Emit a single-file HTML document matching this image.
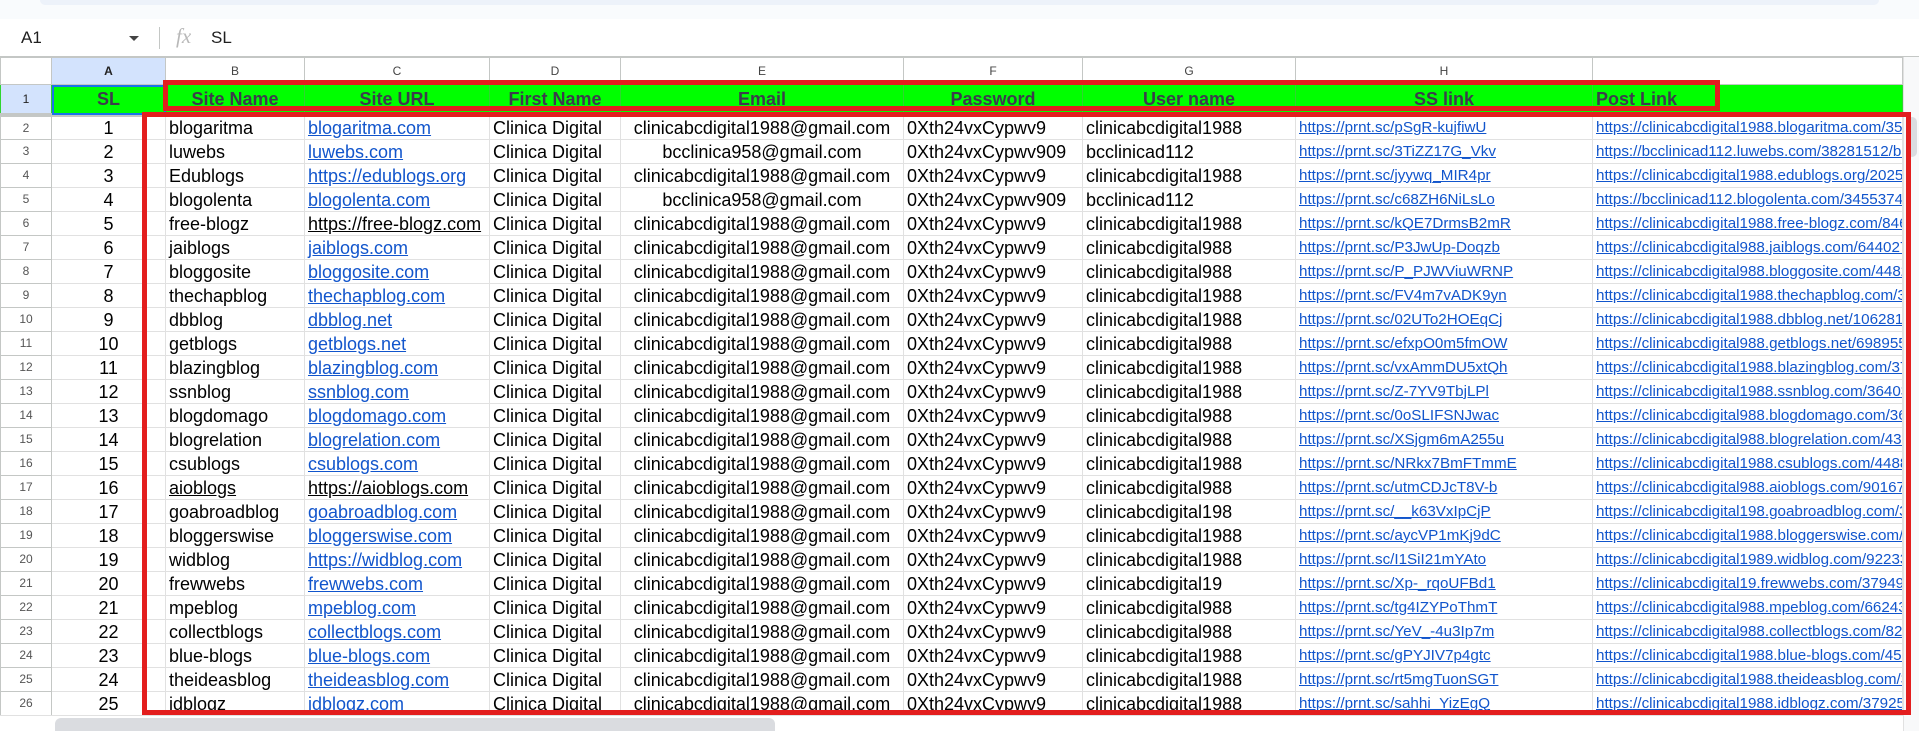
<!DOCTYPE html>
<html><head><meta charset="utf-8"><style>
*{box-sizing:border-box;margin:0;padding:0}
body{width:1919px;height:731px;overflow:hidden;background:#fff;font-family:"Liberation Sans",Arial,sans-serif;position:relative}
.top{position:absolute;left:0;top:0;width:1919px;height:19px;background:#f9fbfd}
.top div{position:absolute;left:40px;right:40px;top:0;height:5px;background:#edf2fa;border-radius:0 0 12px 12px}
.fb{position:absolute;left:0;top:19px;width:1919px;height:38px;background:#fff;border-bottom:1px solid #c4c7c5}
.nb{position:absolute;left:21px;top:9px;font-size:17px;color:#1f1f1f}
.arr{position:absolute;left:129px;top:17px;width:0;height:0;border-left:5px solid transparent;border-right:5px solid transparent;border-top:5px solid #444}
.sep{position:absolute;left:159px;top:8px;width:1px;height:22px;background:#c4c7c5}
.fx{position:absolute;left:176px;top:5px;font-family:"Liberation Serif",serif;font-style:italic;font-size:21px;color:#b8b8b8}
.fv{position:absolute;left:211px;top:9px;font-size:17px;color:#1f1f1f}
table{position:absolute;left:0;top:57px;border-collapse:collapse;table-layout:fixed;width:1902px}
td{overflow:hidden;white-space:nowrap;border:1px solid #e1e1e1;font-size:18px;color:#000;padding:0 3px;height:24px;line-height:22px;vertical-align:bottom}
tr.ch td{height:27px;font-size:12px;line-height:25px;vertical-align:middle;color:#444;text-align:center;border-color:#c4c7c5;background:#fff}
tr.h1 td{height:30px;line-height:24px;background:#00ff00;font-weight:bold;font-size:18px;color:#3c3c4c;text-align:center;border-color:#2fd52f;border-bottom:4px solid #c4c7c5;vertical-align:middle}
td.rh{font-size:12px;color:#555;text-align:center;border-color:#c4c7c5;background:#fff;padding:0;vertical-align:middle;line-height:22px}
tr.h1 td.rh{background:#d3e3fd;color:#222;font-weight:normal;font-size:12px}
tr.ch td.sel{background:#d3e3fd;font-weight:bold;color:#222}
td.c{text-align:center}
a{color:#1155cc;text-decoration:underline}
td.s{font-size:15.2px}
.k{color:#000;text-decoration:underline}
.red{position:absolute;border:5px solid #e31e1e}
.hs{position:absolute;left:55px;top:718px;width:720px;height:13px;background:#dadce0;border-radius:6px 6px 0 0}
.vs{position:absolute;left:1903px;top:57px;width:16px;height:674px;background:#f8f9fa;border-left:1px solid #e1e1e1}
.vs div{position:absolute;left:3px;top:60px;width:10px;height:40px;background:#dadce0;border-radius:5px}
</style></head><body>
<div class="top"><div></div></div>
<div class="fb"><span class="nb">A1</span><span class="arr"></span><span class="sep"></span><span class="fx">fx</span><span class="fv">SL</span></div>
<table>
<colgroup><col style="width:51px"><col style="width:114px"><col style="width:139px"><col style="width:185px"><col style="width:131px"><col style="width:283px"><col style="width:179px"><col style="width:213px"><col style="width:297px"><col style="width:310px"></colgroup>
<tr class="ch"><td></td><td class="sel">A</td><td>B</td><td>C</td><td>D</td><td>E</td><td>F</td><td>G</td><td>H</td><td></td></tr>
<tr class="h1"><td class="rh">1</td><td style="outline:2px solid #1a73e8;outline-offset:-2px">SL</td><td>Site Name</td><td>Site URL</td><td>First Name</td><td>Email</td><td>Password</td><td>User name</td><td>SS link</td><td style="text-align:left">Post Link</td></tr>
<tr><td class="rh">2</td><td class="c">1</td><td>blogaritma</td><td><a>blogaritma.com</a></td><td>Clinica Digital</td><td class="c">clinicabcdigital1988@gmail.com</td><td>0Xth24vxCypwv9</td><td>clinicabcdigital1988</td><td class="s"><a>https://prnt.sc/pSgR-kujfiwU</a></td><td class="s"><a>https://clinicabcdigital1988.blogaritma.com/350123</a></td></tr>
<tr><td class="rh">3</td><td class="c">2</td><td>luwebs</td><td><a>luwebs.com</a></td><td>Clinica Digital</td><td class="c">bcclinica958@gmail.com</td><td>0Xth24vxCypwv909</td><td>bcclinicad112</td><td class="s"><a>https://prnt.sc/3TiZZ17G_Vkv</a></td><td class="s"><a>https://bcclinicad112.luwebs.com/38281512/bu</a></td></tr>
<tr><td class="rh">4</td><td class="c">3</td><td>Edublogs</td><td><a>https://edublogs.org</a></td><td>Clinica Digital</td><td class="c">clinicabcdigital1988@gmail.com</td><td>0Xth24vxCypwv9</td><td>clinicabcdigital1988</td><td class="s"><a>https://prnt.sc/jyywq_MIR4pr</a></td><td class="s"><a>https://clinicabcdigital1988.edublogs.org/2025/</a></td></tr>
<tr><td class="rh">5</td><td class="c">4</td><td>blogolenta</td><td><a>blogolenta.com</a></td><td>Clinica Digital</td><td class="c">bcclinica958@gmail.com</td><td>0Xth24vxCypwv909</td><td>bcclinicad112</td><td class="s"><a>https://prnt.sc/c68ZH6NiLsLo</a></td><td class="s"><a>https://bcclinicad112.blogolenta.com/34553741</a></td></tr>
<tr><td class="rh">6</td><td class="c">5</td><td>free-blogz</td><td><span class="k">https://free-blogz.com</span></td><td>Clinica Digital</td><td class="c">clinicabcdigital1988@gmail.com</td><td>0Xth24vxCypwv9</td><td>clinicabcdigital1988</td><td class="s"><a>https://prnt.sc/kQE7DrmsB2mR</a></td><td class="s"><a>https://clinicabcdigital1988.free-blogz.com/8461</a></td></tr>
<tr><td class="rh">7</td><td class="c">6</td><td>jaiblogs</td><td><a>jaiblogs.com</a></td><td>Clinica Digital</td><td class="c">clinicabcdigital1988@gmail.com</td><td>0Xth24vxCypwv9</td><td>clinicabcdigital988</td><td class="s"><a>https://prnt.sc/P3JwUp-Doqzb</a></td><td class="s"><a>https://clinicabcdigital988.jaiblogs.com/644027</a></td></tr>
<tr><td class="rh">8</td><td class="c">7</td><td>bloggosite</td><td><a>bloggosite.com</a></td><td>Clinica Digital</td><td class="c">clinicabcdigital1988@gmail.com</td><td>0Xth24vxCypwv9</td><td>clinicabcdigital988</td><td class="s"><a>https://prnt.sc/P_PJWViuWRNP</a></td><td class="s"><a>https://clinicabcdigital988.bloggosite.com/4482</a></td></tr>
<tr><td class="rh">9</td><td class="c">8</td><td>thechapblog</td><td><a>thechapblog.com</a></td><td>Clinica Digital</td><td class="c">clinicabcdigital1988@gmail.com</td><td>0Xth24vxCypwv9</td><td>clinicabcdigital1988</td><td class="s"><a>https://prnt.sc/FV4m7vADK9yn</a></td><td class="s"><a>https://clinicabcdigital1988.thechapblog.com/3</a></td></tr>
<tr><td class="rh">10</td><td class="c">9</td><td>dbblog</td><td><a>dbblog.net</a></td><td>Clinica Digital</td><td class="c">clinicabcdigital1988@gmail.com</td><td>0Xth24vxCypwv9</td><td>clinicabcdigital1988</td><td class="s"><a>https://prnt.sc/02UTo2HOEqCj</a></td><td class="s"><a>https://clinicabcdigital1988.dbblog.net/106281</a></td></tr>
<tr><td class="rh">11</td><td class="c">10</td><td>getblogs</td><td><a>getblogs.net</a></td><td>Clinica Digital</td><td class="c">clinicabcdigital1988@gmail.com</td><td>0Xth24vxCypwv9</td><td>clinicabcdigital988</td><td class="s"><a>https://prnt.sc/efxpO0m5fmOW</a></td><td class="s"><a>https://clinicabcdigital988.getblogs.net/698955</a></td></tr>
<tr><td class="rh">12</td><td class="c">11</td><td>blazingblog</td><td><a>blazingblog.com</a></td><td>Clinica Digital</td><td class="c">clinicabcdigital1988@gmail.com</td><td>0Xth24vxCypwv9</td><td>clinicabcdigital1988</td><td class="s"><a>https://prnt.sc/vxAmmDU5xtQh</a></td><td class="s"><a>https://clinicabcdigital1988.blazingblog.com/37</a></td></tr>
<tr><td class="rh">13</td><td class="c">12</td><td>ssnblog</td><td><a>ssnblog.com</a></td><td>Clinica Digital</td><td class="c">clinicabcdigital1988@gmail.com</td><td>0Xth24vxCypwv9</td><td>clinicabcdigital1988</td><td class="s"><a>https://prnt.sc/Z-7YV9TbjLPl</a></td><td class="s"><a>https://clinicabcdigital1988.ssnblog.com/36403</a></td></tr>
<tr><td class="rh">14</td><td class="c">13</td><td>blogdomago</td><td><a>blogdomago.com</a></td><td>Clinica Digital</td><td class="c">clinicabcdigital1988@gmail.com</td><td>0Xth24vxCypwv9</td><td>clinicabcdigital988</td><td class="s"><a>https://prnt.sc/0oSLIFSNJwac</a></td><td class="s"><a>https://clinicabcdigital988.blogdomago.com/36</a></td></tr>
<tr><td class="rh">15</td><td class="c">14</td><td>blogrelation</td><td><a>blogrelation.com</a></td><td>Clinica Digital</td><td class="c">clinicabcdigital1988@gmail.com</td><td>0Xth24vxCypwv9</td><td>clinicabcdigital988</td><td class="s"><a>https://prnt.sc/XSjgm6mA255u</a></td><td class="s"><a>https://clinicabcdigital988.blogrelation.com/438</a></td></tr>
<tr><td class="rh">16</td><td class="c">15</td><td>csublogs</td><td><a>csublogs.com</a></td><td>Clinica Digital</td><td class="c">clinicabcdigital1988@gmail.com</td><td>0Xth24vxCypwv9</td><td>clinicabcdigital1988</td><td class="s"><a>https://prnt.sc/NRkx7BmFTmmE</a></td><td class="s"><a>https://clinicabcdigital1988.csublogs.com/4488</a></td></tr>
<tr><td class="rh">17</td><td class="c">16</td><td><span class="k">aioblogs</span></td><td><span class="k">https://aioblogs.com</span></td><td>Clinica Digital</td><td class="c">clinicabcdigital1988@gmail.com</td><td>0Xth24vxCypwv9</td><td>clinicabcdigital988</td><td class="s"><a>https://prnt.sc/utmCDJcT8V-b</a></td><td class="s"><a>https://clinicabcdigital988.aioblogs.com/90167</a></td></tr>
<tr><td class="rh">18</td><td class="c">17</td><td>goabroadblog</td><td><a>goabroadblog.com</a></td><td>Clinica Digital</td><td class="c">clinicabcdigital1988@gmail.com</td><td>0Xth24vxCypwv9</td><td>clinicabcdigital198</td><td class="s"><a>https://prnt.sc/__k63VxIpCjP</a></td><td class="s"><a>https://clinicabcdigital198.goabroadblog.com/3</a></td></tr>
<tr><td class="rh">19</td><td class="c">18</td><td>bloggerswise</td><td><a>bloggerswise.com</a></td><td>Clinica Digital</td><td class="c">clinicabcdigital1988@gmail.com</td><td>0Xth24vxCypwv9</td><td>clinicabcdigital1988</td><td class="s"><a>https://prnt.sc/aycVP1mKj9dC</a></td><td class="s"><a>https://clinicabcdigital1988.bloggerswise.com/</a></td></tr>
<tr><td class="rh">20</td><td class="c">19</td><td>widblog</td><td><a>https://widblog.com</a></td><td>Clinica Digital</td><td class="c">clinicabcdigital1988@gmail.com</td><td>0Xth24vxCypwv9</td><td>clinicabcdigital1988</td><td class="s"><a>https://prnt.sc/I1SiI21mYAto</a></td><td class="s"><a>https://clinicabcdigital1989.widblog.com/92233</a></td></tr>
<tr><td class="rh">21</td><td class="c">20</td><td>frewwebs</td><td><a>frewwebs.com</a></td><td>Clinica Digital</td><td class="c">clinicabcdigital1988@gmail.com</td><td>0Xth24vxCypwv9</td><td>clinicabcdigital19</td><td class="s"><a>https://prnt.sc/Xp-_rqoUFBd1</a></td><td class="s"><a>https://clinicabcdigital19.frewwebs.com/37949</a></td></tr>
<tr><td class="rh">22</td><td class="c">21</td><td>mpeblog</td><td><a>mpeblog.com</a></td><td>Clinica Digital</td><td class="c">clinicabcdigital1988@gmail.com</td><td>0Xth24vxCypwv9</td><td>clinicabcdigital988</td><td class="s"><a>https://prnt.sc/tg4IZYPoThmT</a></td><td class="s"><a>https://clinicabcdigital988.mpeblog.com/66243</a></td></tr>
<tr><td class="rh">23</td><td class="c">22</td><td>collectblogs</td><td><a>collectblogs.com</a></td><td>Clinica Digital</td><td class="c">clinicabcdigital1988@gmail.com</td><td>0Xth24vxCypwv9</td><td>clinicabcdigital988</td><td class="s"><a>https://prnt.sc/YeV_-4u3Ip7m</a></td><td class="s"><a>https://clinicabcdigital988.collectblogs.com/820</a></td></tr>
<tr><td class="rh">24</td><td class="c">23</td><td>blue-blogs</td><td><a>blue-blogs.com</a></td><td>Clinica Digital</td><td class="c">clinicabcdigital1988@gmail.com</td><td>0Xth24vxCypwv9</td><td>clinicabcdigital1988</td><td class="s"><a>https://prnt.sc/gPYJIV7p4gtc</a></td><td class="s"><a>https://clinicabcdigital1988.blue-blogs.com/451</a></td></tr>
<tr><td class="rh">25</td><td class="c">24</td><td>theideasblog</td><td><a>theideasblog.com</a></td><td>Clinica Digital</td><td class="c">clinicabcdigital1988@gmail.com</td><td>0Xth24vxCypwv9</td><td>clinicabcdigital1988</td><td class="s"><a>https://prnt.sc/rt5mgTuonSGT</a></td><td class="s"><a>https://clinicabcdigital1988.theideasblog.com/3</a></td></tr>
<tr><td class="rh">26</td><td class="c">25</td><td>idblogz</td><td><a>idblogz.com</a></td><td>Clinica Digital</td><td class="c">clinicabcdigital1988@gmail.com</td><td>0Xth24vxCypwv9</td><td>clinicabcdigital1988</td><td class="s"><a>https://prnt.sc/sahhi_YizEgQ</a></td><td class="s"><a>https://clinicabcdigital1988.idblogz.com/37925</a></td></tr>
</table>
<div class="vs"><div></div></div>
<div style="position:absolute;left:0;top:715px;width:1903px;height:16px;background:#fff;border-top:1px solid #e1e1e1"></div>
<div class="hs"></div>
<div class="red" style="left:163px;top:80px;width:1557px;height:31px"></div>
<div class="red" style="left:142px;top:112px;width:1769px;height:603px"></div>
</body></html>
